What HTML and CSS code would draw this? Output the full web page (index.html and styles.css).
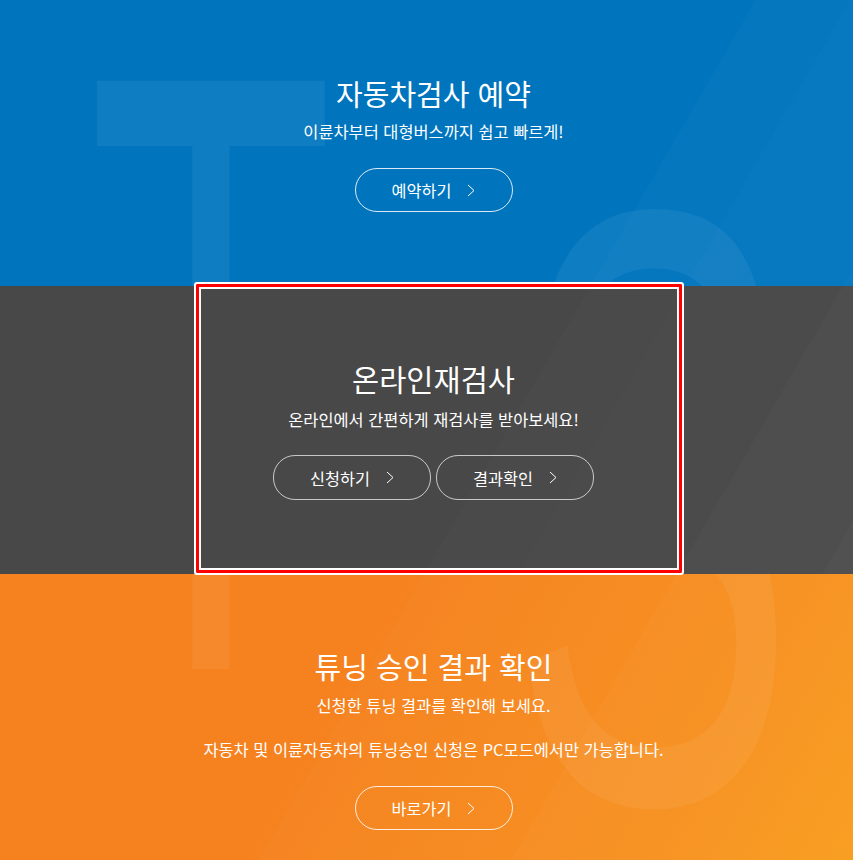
FILE: index.html
```html
<!DOCTYPE html>
<html lang="ko">
<head>
    <meta charset="UTF-8">
    <title>자동차검사</title>
    <link rel="stylesheet" href="styles.css">
</head>
<body>
<div class="page">
    <div class="marks">
        <span class="mark markT">T</span>
        <span class="mark markS">S</span>
    </div>

    <section class="band bandBlue">
        <div class="bandInner">
            <h2 class="bandTitle">자동차검사 예약</h2>
            <p class="bandDesc descSm">이륜차부터 대형버스까지 쉽고 빠르게!</p>
            <div class="btnRow">
                <a class="pill" href="#">예약하기
                    <svg class="arrow" width="8" height="13" viewBox="0 0 8 13"><polyline points="1,1 7,6.5 1,12"/></svg>
                </a>
            </div>
        </div>
    </section>

    <section class="band bandGray">
        <div class="focusRing"></div>
        <div class="bandInner">
            <h2 class="bandTitle titleWide">온라인재검사</h2>
            <p class="bandDesc">온라인에서 간편하게 재검사를 받아보세요!</p>
            <div class="btnRow">
                <a class="pill pillGray" href="#">신청하기
                    <svg class="arrow" width="8" height="13" viewBox="0 0 8 13"><polyline points="1,1 7,6.5 1,12"/></svg>
                </a>
                <a class="pill pillGray" href="#">결과확인
                    <svg class="arrow" width="8" height="13" viewBox="0 0 8 13"><polyline points="1,1 7,6.5 1,12"/></svg>
                </a>
            </div>
        </div>
    </section>

    <section class="band bandOrange">
        <div class="bandInner">
            <h2 class="bandTitle">튜닝 승인 결과 확인</h2>
            <p class="bandDesc descTight">신청한 튜닝 결과를 확인해 보세요.</p>
            <p class="bandNote">자동차 및 이륜자동차의 튜닝승인 신청은 PC모드에서만 가능합니다.</p>
            <div class="btnRow">
                <a class="pill" href="#">바로가기
                    <svg class="arrow" width="8" height="13" viewBox="0 0 8 13"><polyline points="1,1 7,6.5 1,12"/></svg>
                </a>
            </div>
        </div>
    </section>
</div>
</body>
</html>
```

FILE: styles.css
```css
*{
    padding: 0;
    margin: 0;
    box-sizing: border-box;
}
body{
    font-family: "Noto Sans CJK KR", "Noto Sans", sans-serif;
    color: #fff;
}
.page{
    position: relative;
    width: 853px;
    height: 860px;
    overflow: hidden;
}

/* big faint TS letters behind blue and orange */
.marks{
    position: absolute;
    top: 0;
    left: 0;
    width: 100%;
    height: 100%;
    pointer-events: none;
}
.mark{
    position: absolute;
    font-family: "Liberation Sans", Arial, sans-serif;
    color: rgba(255, 255, 255, 0.06);
    white-space: nowrap;
    transform-origin: 0 0;
}
.markT{
    font-size: 855px;
    line-height: 855px;
    top: -55px;
    left: 88px;
    transform: scaleX(0.471);
}
.markS{
    font-size: 848px;
    line-height: 848px;
    top: 83px;
    left: 509px;
    transform: scaleX(0.507);
}

/* bands */
.band{
    padding-left: 14px;
}
.bandInner{
    position: relative;
    z-index: 1;
    display: flex;
    flex-direction: column;
    align-items: center;
}
.bandBlue{
    height: 286px;
    padding-top: 73px;
    background: linear-gradient(120deg, rgba(255,255,255,0) 56%, rgba(255,255,255,.015) 56%, rgba(255,255,255,.015) 63%, rgba(255,255,255,.028) 63%, rgba(255,255,255,.028) 74.7%, rgba(255,255,255,.04) 74.7%, rgba(255,255,255,.04) 85.5%, rgba(255,255,255,.055) 85.5%) fixed, #0075be;
}
.bandGray{
    position: relative;
    z-index: 1;
    height: 288px;
    padding-top: 74px;
    background: linear-gradient(120deg, rgba(255,255,255,0) 56%, rgba(255,255,255,.01) 56%, rgba(255,255,255,.01) 63%, rgba(255,255,255,.015) 63%, rgba(255,255,255,.015) 74.7%, rgba(255,255,255,.03) 74.7%, rgba(255,255,255,.03) 85.5%, rgba(255,255,255,.05) 85.5%) fixed, #484848;
}
.bandOrange{
    height: 286px;
    padding-top: 74px;
    background: linear-gradient(120deg, rgba(255,255,255,0) 56%, rgba(255,255,255,.015) 56%, rgba(255,255,255,.015) 74.7%, rgba(255,255,255,.03) 74.7%) fixed, linear-gradient(120deg, #f5821f 55%, #f7901e 85%, #f89c1b 100%) fixed;
}

/* highlight ring over the middle band */
.focusRing{
    position: absolute;
    z-index: 2;
    top: -4px;
    left: 194px;
    width: 490px;
    height: 293px;
    border: 2px solid #fff;
    border-radius: 3px;
    box-shadow: inset 0 0 0 3px #f00, inset 0 0 0 5px #fff;
    pointer-events: none;
}

.bandTitle{
    font-size: 29px;
    line-height: 36px;
    font-weight: normal;
}
.bandBlue .bandTitle{
    line-height: 40px;
}
.titleWide{
    font-size: 29.5px;
}
.bandDesc{
    margin-top: 12px;
    font-size: 16.4px;
    line-height: 22px;
}
.descSm{
    margin-top: 8px;
    line-height: 20px;
}
.descTight{
    margin-top: 10px;
}
.bandNote{
    margin-top: 22px;
    font-size: 16.4px;
    line-height: 22px;
}

.btnRow{
    display: flex;
    gap: 5px;
    margin-top: 27px;
}
.bandGray .btnRow{
    margin-top: 25px;
}
.bandOrange .btnRow{
    margin-top: 26px;
}
.pill{
    display: flex;
    align-items: center;
    justify-content: center;
    gap: 16px;
    width: 158px;
    height: 44px;
    border: 1px solid rgba(255, 255, 255, 0.85);
    border-radius: 22px;
    color: #fff;
    font-size: 16.3px;
    text-decoration: none;
}
.pillGray{
    height: 45px;
    border-color: rgba(255, 255, 255, 0.7);
}
.arrow{
    display: block;
    fill: none;
    stroke: #fff;
    stroke-width: 1;
}
```
